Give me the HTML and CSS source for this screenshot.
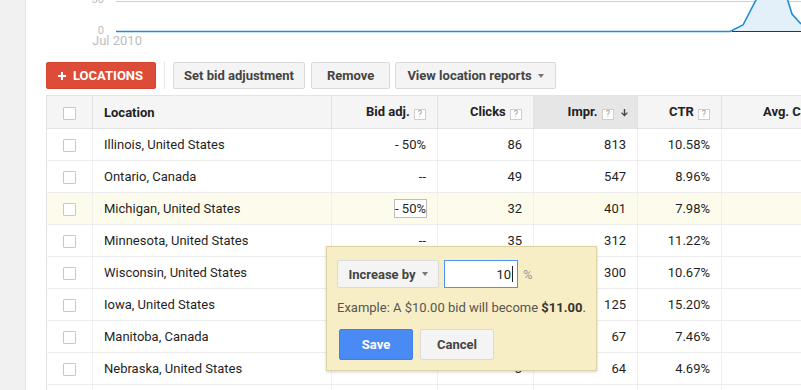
FILE: index.html
```html
<!DOCTYPE html>
<html>
<head>
<meta charset="utf-8">
<link rel="stylesheet" href="styles.css">
</head>
<body>
<div class="page">
  <aside class="sidebar"></aside>
  <main class="main">
    <svg class="chart" width="775" height="50" viewBox="0 0 775 50">
      <line x1="90" y1="1.5" x2="775" y2="1.5" stroke="#d0d0d0" stroke-width="1"/>
      <text class="axis" x="78" y="3" text-anchor="end">30</text>
      <text class="axis" x="78" y="34" text-anchor="end">0</text>
      <text class="axis date" x="66" y="45">Jul 2010</text>
      <path d="M704 31 L717 25 L730 0 L762 0 L766 14 L775 24 L775 31 Z" fill="#e3eff9"/>
      <line x1="706" y1="31.5" x2="775" y2="31.5" stroke="#333" stroke-width="1"/>
      <polyline points="90,31.5 704,31.5 717,25 731,-2" fill="none" stroke="#1f8dd6" stroke-width="1.6"/>
      <polyline points="761,-2 766,14 775,24" fill="none" stroke="#1f8dd6" stroke-width="1.6"/>
    </svg>

    <div class="toolbar">
      <button class="btn btn-red"><svg class="plus" width="8" height="8" viewBox="0 0 8 8"><path d="M3 0h2v3h3v2H5v3H3V5H0V3h3z" fill="#fff"/></svg>LOCATIONS</button>
      <span class="sep"></span>
      <button class="btn btn-set">Set bid adjustment</button>
      <button class="btn btn-remove">Remove</button>
      <button class="btn btn-view">View location reports <span class="caret"></span></button>
    </div>

    <table class="grid">
      <colgroup>
        <col class="c-check"><col class="c-loc"><col class="c-bid"><col class="c-clicks"><col class="c-impr"><col class="c-ctr"><col class="c-avg">
      </colgroup>
      <thead>
        <tr>
          <th class="chk"><span class="box"></span></th>
          <th class="left">Location</th>
          <th>Bid adj. <span class="help">?</span></th>
          <th>Clicks <span class="help">?</span></th>
          <th class="sorted">Impr. <span class="help">?</span> <svg class="arrow" width="7" height="8" viewBox="0 0 7 8"><path d="M2.8 0h1.4v5L6 3.2l0.9 0.9L3.5 7.5 0.1 4.1 1 3.2l1.8 1.8z" fill="#444"/></svg></th>
          <th>CTR <span class="help">?</span></th>
          <th class="avg">Avg. CPC <span class="help">?</span></th>
        </tr>
      </thead>
      <tbody>
        <tr><td class="chk"><span class="box"></span></td><td class="left">Illinois, United States</td><td>- 50%</td><td>86</td><td>813</td><td>10.58%</td><td></td></tr>
        <tr><td class="chk"><span class="box"></span></td><td class="left">Ontario, Canada</td><td>--</td><td>49</td><td>547</td><td>8.96%</td><td></td></tr>
        <tr class="hl"><td class="chk"><span class="box"></span></td><td class="left">Michigan, United States</td><td><span class="edit">- 50%</span></td><td>32</td><td>401</td><td>7.98%</td><td></td></tr>
        <tr><td class="chk"><span class="box"></span></td><td class="left">Minnesota, United States</td><td>--</td><td>35</td><td>312</td><td>11.22%</td><td></td></tr>
        <tr><td class="chk"><span class="box"></span></td><td class="left">Wisconsin, United States</td><td>--</td><td>34</td><td>300</td><td>10.67%</td><td></td></tr>
        <tr><td class="chk"><span class="box"></span></td><td class="left">Iowa, United States</td><td>--</td><td>19</td><td>125</td><td>15.20%</td><td></td></tr>
        <tr><td class="chk"><span class="box"></span></td><td class="left">Manitoba, Canada</td><td>--</td><td>5</td><td>67</td><td>7.46%</td><td></td></tr>
        <tr><td class="chk"><span class="box"></span></td><td class="left">Nebraska, United States</td><td>--</td><td>3</td><td>64</td><td>4.69%</td><td></td></tr>
        <tr><td class="chk"><span class="box"></span></td><td class="left">Kansas, United States</td><td>--</td><td>2</td><td>58</td><td>3.45%</td><td></td></tr>
      </tbody>
    </table>

    <div class="popup">
      <div class="pop-row">
        <button class="btn btn-menu">Increase by <span class="caret"></span></button>
        <div class="input">10<span class="cursor"></span></div>
        <span class="pct">%</span>
      </div>
      <p class="example">Example: A $10.00 bid will become <b>$11.00</b>.</p>
      <div class="pop-actions">
        <button class="btn btn-blue">Save</button>
        <button class="btn btn-cancel">Cancel</button>
      </div>
    </div>
  </main>
</div>
</body>
</html>
```

FILE: styles.css
```css
html, body {
  margin: 0;
  padding: 0;
}
body {
  width: 801px;
  height: 390px;
  overflow: hidden;
  font-family: Roboto, "Liberation Sans", Arial, sans-serif;
  font-size: 13px;
  color: #1f1f1f;
  background: #fff;
}
.page {
  display: flex;
  height: 390px;
}
.sidebar {
  flex: none;
  width: 25px;
  background: #f1f1f1;
  border-right: 1px solid #e2e2e2;
}
.main {
  flex: 1;
  min-width: 0;
  position: relative;
  overflow: hidden;
}
.chart {
  display: block;
  overflow: hidden;
}
.axis {
  font-family: Roboto, "Liberation Sans", Arial, sans-serif;
  font-size: 11px;
  fill: #bdbdbd;
}
.axis.date {
  font-size: 13px;
}

/* toolbar */
.toolbar {
  display: flex;
  align-items: center;
  margin: 12px 0 0 20px;
  height: 27px;
}
.btn {
  box-sizing: border-box;
  height: 27px;
  padding: 0 12px;
  display: inline-flex;
  align-items: center;
  justify-content: center;
  border: 1px solid #dadada;
  border-radius: 2px;
  background: #f4f4f4;
  color: #444;
  font-family: Roboto, "Liberation Sans", Arial, sans-serif;
  font-weight: bold;
  font-size: 13px;
  white-space: nowrap;
  margin-right: 6px;
}
.btn-red {
  background: #dd4b39;
  border-color: #d44634;
  color: #fff;
  padding: 0 12px 0 11px;
  margin-right: 0;
}
.plus {
  margin-right: 7px;
}
.btn-set {
  padding: 0 10px;
}
.btn-remove {
  padding: 0 15px;
  margin-right: 5px;
}
.btn-view {
  padding: 0 11px;
}
.sep {
  width: 1px;
  height: 27px;
  background: #e6e6e6;
  margin: 0 8px 0 8px;
}
.caret {
  display: inline-block;
  width: 0;
  height: 0;
  border-left: 3.5px solid transparent;
  border-right: 3.5px solid transparent;
  border-top: 4px solid #777;
  margin-left: 6px;
}

/* table */
.grid {
  margin: 6px 0 0 20px;
  border-collapse: collapse;
  table-layout: fixed;
  width: 795px;
}
.c-check { width: 46px; }
.c-loc { width: 239px; }
.c-bid { width: 106px; }
.c-clicks { width: 96px; }
.c-impr { width: 104px; }
.c-ctr { width: 84px; }
.c-avg { width: 120px; }

.grid th, .grid td {
  padding: 0 11px;
  text-align: right;
  white-space: nowrap;
  overflow: hidden;
}
.grid th {
  height: 32px;
  background: #f5f5f5;
  font-weight: bold;
  color: #222;
  border: 1px solid #e3e3e3;
}
.grid th.sorted {
  background: #e6e6e6;
  padding-right: 9px;
}
.grid th.avg {
  text-align: left;
  padding-left: 41px;
}
.grid td {
  height: 31px;
  border-bottom: 1px solid #ececec;
  border-left: 1px solid #f0f0f0;
  border-right: 1px solid #f0f0f0;
}
.grid .left {
  text-align: left;
}
.grid .chk {
  text-align: center;
  padding: 0;
}
.grid td:first-child {
  border-left: 1px solid #e3e3e3;
}
.box {
  display: inline-block;
  box-sizing: border-box;
  width: 13px;
  height: 13px;
  border: 1px solid #c8c8c8;
  border-radius: 1px;
  background: #fff;
  vertical-align: middle;
}
.help {
  display: inline-block;
  box-sizing: border-box;
  width: 12px;
  height: 11px;
  border: 1px solid #cfcfcf;
  background: #fff;
  color: #999;
  font-size: 9px;
  font-weight: normal;
  line-height: 9px;
  text-align: center;
  vertical-align: -1px;
  margin-left: 1px;
}
.arrow {
  vertical-align: -1px;
  margin-left: 4px;
}
.hl td {
  background: #fdfcec;
}
.edit {
  border: 1px solid #bdbdbd;
  padding: 1px 0 1px 0;
  margin-right: -1px;
  background: #fff;
}

/* popup */
.popup {
  position: absolute;
  left: 300px;
  top: 246px;
  box-sizing: border-box;
  width: 271px;
  height: 125px;
  padding: 13px 10px 0 10px;
  background: #f8eec6;
  border: 1px solid #dcd3a6;
  box-shadow: 0 1px 3px rgba(0,0,0,0.18);
}
.pop-row {
  display: flex;
  align-items: center;
}
.btn-menu {
  width: 102px;
  height: 28px;
  margin-right: 5px;
}
.input {
  box-sizing: border-box;
  width: 74px;
  height: 28px;
  border: 1px solid #4d90fe;
  background: #fff;
  display: flex;
  align-items: center;
  justify-content: flex-end;
  padding-right: 4px;
  font-size: 13px;
  color: #222;
}
.cursor {
  display: inline-block;
  width: 1px;
  height: 16px;
  background: #222;
  margin-left: 1px;
}
.pct {
  color: #999;
  margin-left: 5px;
}
.example {
  margin: 12px 0 0 0;
  color: #555;
  line-height: 16px;
}
.example b {
  color: #333;
}
.pop-actions {
  display: flex;
  margin: 13px 0 0 2px;
}
.btn-blue {
  width: 74px;
  height: 31px;
  background: #4a8af4;
  border-color: #3f7fe8;
  color: #fff;
  margin-right: 7px;
}
.btn-cancel {
  width: 74px;
  height: 31px;
}
```
